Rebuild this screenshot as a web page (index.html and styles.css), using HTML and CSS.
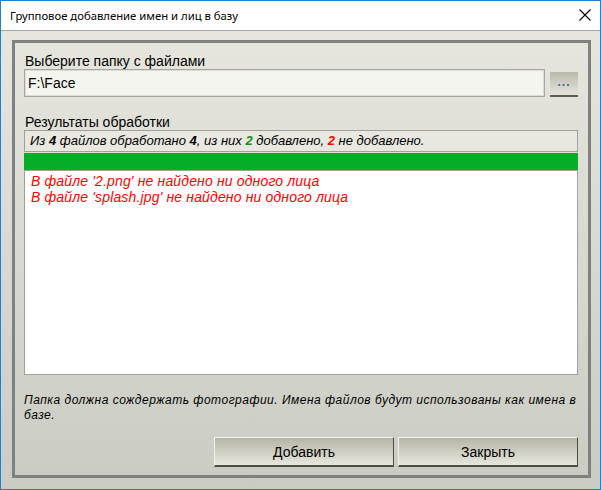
FILE: index.html
```html
<!DOCTYPE html>
<html lang="ru">

<head>
    <meta charset="UTF-8">
    <title>Групповое добавление имен и лиц в базу</title>
    <link rel="stylesheet" href="styles.css">
</head>

<body>
    <div class="window">
        <div class="titlebar">
            <span class="title">Групповое добавление имен и лиц в базу</span>
            <svg class="close" width="12" height="12" viewBox="0 0 12 12">
                <path d="M0.5 0.5 L11.5 11.5 M11.5 0.5 L0.5 11.5" stroke="#000" stroke-width="1.1" fill="none"/>
            </svg>
        </div>

        <div class="client">
            <div class="frame">
                <label class="caption" for="folder">Выберите папку с файлами</label>
                <div class="folder-row">
                    <input id="folder" class="folder-input" type="text" value="F:\Face">
                    <button class="browse" type="button">...</button>
                </div>

                <div class="caption results-caption">Результаты обработки</div>
                <div class="status">
                    Из <b>4</b> файлов обработано <b>4</b>, из них <b class="ok">2</b> добавлено, <b class="bad">2</b> не добавлено.
                </div>
                <div class="progress"></div>
                <div class="log">
                    <div>В файле '2.png' не найдено ни одного лица</div>
                    <div>В файле 'splash.jpg' не найдено ни одного лица</div>
                </div>

                <p class="note">Папка должна сождержать фотографии. Имена файлов будут использованы как имена в<br>базе.</p>

                <div class="actions">
                    <button class="btn" type="button">Добавить</button>
                    <button class="btn" type="button">Закрыть</button>
                </div>
            </div>
        </div>
    </div>
</body>

</html>
```

FILE: styles.css
```css
* {
    box-sizing: border-box;
}

body {
    margin: 0;
    font-family: "Liberation Sans", Arial, sans-serif;
}

.window {
    width: 601px;
    height: 490px;
    border: 1px solid #1883d7;
    display: flex;
    flex-direction: column;
}

.titlebar {
    height: 31px;
    background: #fff;
    border-bottom: 1px solid #a3a3a3;
    display: flex;
    align-items: center;
    justify-content: space-between;
    padding: 0 9px 1px 9px;
}

.title {
    font-family: "Noto Sans", sans-serif;
    font-size: 11.3px;
    color: #000;
}

.close {
    display: block;
    margin-top: -1px;
}

.client {
    flex: 1;
    background: linear-gradient(#e6e6df, #cacbc2);
    padding: 9px 9px 11px 11px;
}

.frame {
    height: 438px;
    border: 3px solid #808080;
    padding: 11px 10px 0 9px;
    display: flex;
    flex-direction: column;
}

.caption {
    display: block;
    font-size: 14px;
    line-height: 15px;
    color: #000;
    padding-left: 1px;
}

.folder-row {
    display: flex;
    align-items: flex-end;
    gap: 5px;
}

.folder-input {
    width: 522px;
    height: 28px;
    border: 1px solid #a6a6a6;
    box-shadow: inset 0 0 0 1px #dcdcd4;
    background: #f5f5ef;
    font-family: "Liberation Sans", Arial, sans-serif;
    font-size: 14px;
    padding: 0 0 1px 3px;
    color: #000;
    outline: none;
}

.browse {
    width: 28px;
    height: 25px;
    border: 0;
    border-bottom: 2px solid #5d5c50;
    background: linear-gradient(#b9b9ab, #e4e4dc);
    font-family: "Liberation Sans", Arial, sans-serif;
    font-size: 12px;
    font-weight: bold;
    line-height: 12px;
    color: #3d6685;
    padding: 0 0 4px;
    letter-spacing: 1px;
}

.results-caption {
    margin-top: 17px;
    line-height: 16px;
}

.status {
    height: 22px;
    border: 1px solid #a0a0a0;
    background: #e8e8e1;
    font-size: 13px;
    font-style: italic;
    line-height: 20px;
    padding-left: 5px;
    color: #000;
}

.status .ok {
    color: #15901a;
}

.status .bad {
    color: #ff0000;
}

.progress {
    height: 17px;
    margin-top: 1px;
    background: #06ad29;
}

.log {
    height: 205px;
    border: 1px solid #a0a0a0;
    background: #fff;
    padding: 2px 6px;
    font-size: 14px;
    font-style: italic;
    line-height: 16px;
    letter-spacing: 0.15px;
    color: #ff0000;
}

.note {
    margin: 18px 0 0;
    font-size: 12px;
    font-style: italic;
    line-height: 15px;
    letter-spacing: 0.5px;
    white-space: nowrap;
    color: #000;
}

.actions {
    display: flex;
    justify-content: flex-end;
    gap: 4px;
    margin-top: 14px;
}

.btn {
    width: 180px;
    height: 30px;
    border: 1px solid;
    border-color: #f2f2ea #4e4e44 #4e4e44 #f2f2ea;
    border-bottom-width: 2px;
    background: linear-gradient(#b5b5a7, #e6e6dc);
    font-family: "Liberation Sans", Arial, sans-serif;
    font-size: 14px;
    color: #000;
    padding: 0;
}
```
